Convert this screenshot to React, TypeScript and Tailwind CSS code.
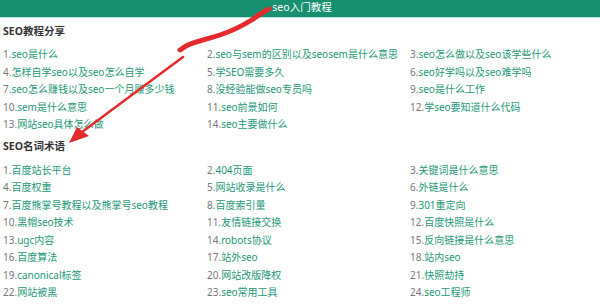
import React from "react";

const tutorials = [
  "seo是什么",
  "seo与sem的区别以及seosem是什么意思",
  "seo怎么做以及seo该学些什么",
  "怎样自学seo以及seo怎么自学",
  "学SEO需要多久",
  "seo好学吗以及seo难学吗",
  "seo怎么赚钱以及seo一个月赚多少钱",
  "没经验能做seo专员吗",
  "seo是什么工作",
  "sem是什么意思",
  "seo前景如何",
  "学seo要知道什么代码",
  "网站seo具体怎么做",
  "seo主要做什么",
];

const terms = [
  "百度站长平台",
  "404页面",
  "关键词是什么意思",
  "百度权重",
  "网站收录是什么",
  "外链是什么",
  "百度熊掌号教程以及熊掌号seo教程",
  "百度索引量",
  "301重定向",
  "黑帽seo技术",
  "友情链接交换",
  "百度快照是什么",
  "ugc内容",
  "robots协议",
  "反向链接是什么意思",
  "百度算法",
  "站外seo",
  "站内seo",
  "canonical标签",
  "网站改版降权",
  "快照劫持",
  "网站被黑",
  "seo常用工具",
  "seo工程师",
];

const LinkGrid = ({items}: {items: string[]}) => (
  <div className="grid grid-cols-[204px_203px_1fr] pl-[3px] text-[10px] leading-[17.5px]">
    {items.map((t, i) => (
      <div key={i} className="whitespace-nowrap">
        <span className="text-[#777]">{i + 1}.</span>
        <span className="text-[#24987a]">{t}</span>
      </div>
    ))}
  </div>
);

export default function App() {
  return (
    <div
      className="relative w-[600px] h-[304px] overflow-hidden bg-white"
      style={{fontFamily: '"Noto Sans", "Noto Sans CJK SC", sans-serif'}}
    >
      <div className="h-[18px] bg-[#16906f] border-b border-[#b9e3d8] flex justify-center">
        <span className="pl-[4px] text-white text-[10.5px] leading-[14px]">seo入门教程</span>
      </div>

      <h2 className="mt-[5px] pl-[3px] text-[10.5px] font-bold leading-[17px] text-[#333]">SEO教程分享</h2>
      <div className="mt-[6px]">
        <LinkGrid items={tutorials}/>
      </div>

      <h2 className="mt-[4px] pl-[3px] text-[10.5px] font-bold leading-[17px] text-[#333]">SEO名词术语</h2>
      <div className="mt-[7px]">
        <LinkGrid items={terms}/>
      </div>

      {/* red annotation strokes */}
      <svg className="absolute inset-0 pointer-events-none" width="600" height="304" viewBox="0 0 600 304">
        <path
          d="M269 9 C262 12 258 16 250 21 C240 27 232 31 220 35 C208 39 196 41 188 45 C184 47 182 49 180 50"
          fill="none"
          stroke="#e42a2c"
          strokeWidth="5"
          strokeLinecap="round"
        />
        <path
          d="M183 57 L78 135"
          fill="none"
          stroke="#e42a2c"
          strokeWidth="2.5"
          strokeLinecap="round"
        />
        <path d="M69 143 L77 127 L89 136 Z" fill="#e42a2c"/>
      </svg>
    </div>
  );
}
